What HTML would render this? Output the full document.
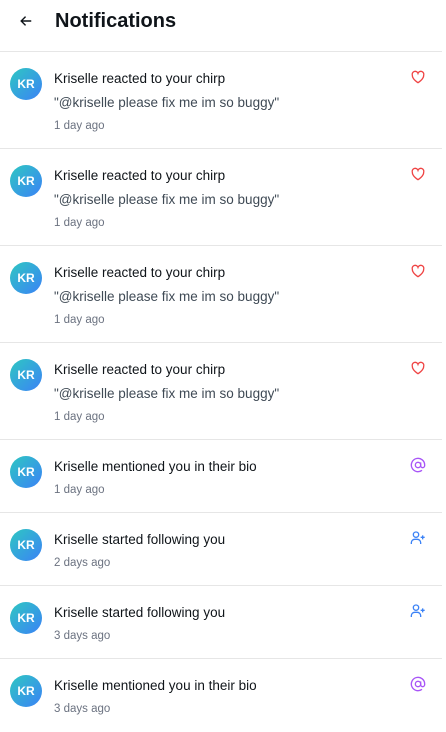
<!DOCTYPE html>
<html><head><meta charset="utf-8"><style>
*{box-sizing:border-box;margin:0;padding:0}
body{width:446px;height:729px;background:#fff;font-family:"Liberation Sans",sans-serif;color:#0f1419;overflow:hidden;position:relative}
.hdr{height:52px;border-bottom:1px solid #e6e6e6;width:442px;position:relative}
.hdr svg{position:absolute;left:19px;top:14px}
.hdr h1{position:absolute;left:55px;top:8px;font-size:20px;font-weight:bold;line-height:26px;color:#0f1419}
.row{position:relative;border-bottom:1px solid #e6e6e6;width:442px}
.big{height:97px}.sm{height:73px}
.av{position:absolute;left:10px;top:16px;width:32px;height:32px;border-radius:50%;background:linear-gradient(135deg,#2ec7c2,#3b82f6);color:#fff;font-size:12px;font-weight:bold;text-align:center;line-height:32px}
.t{position:absolute;left:54px;top:17px}
.l1{font-size:13.5px;line-height:20px;color:#0f1419}
.l2{font-size:13.5px;line-height:20px;color:#3f4a55;margin-top:4px}
.l3{font-size:11.5px;line-height:18px;color:#6b7280;margin-top:4px}
.sm .l3{margin-top:4px}
.ic{position:absolute;left:410px;top:17px}
</style></head><body>
<div class="hdr"><svg width="14" height="14" viewBox="0 0 16 16"><path d="M14 8H2.5M7.5 3L2.5 8l5 5" fill="none" stroke="#0f1419" stroke-width="1.6"/></svg><h1>Notifications</h1></div>

<div class="row big"><div class="av">KR</div><div class="t"><div class="l1">Kriselle reacted to your chirp</div><div class="l2">"@kriselle please fix me im so buggy"</div><div class="l3">1 day ago</div></div><svg class="ic" width="16" height="16" viewBox="0 0 24 24"><path d="M12 20.5s-8.5-5-8.5-11A4.5 4.5 0 0 1 12 6.5a4.5 4.5 0 0 1 8.5 3c0 6-8.5 11-8.5 11z" fill="none" stroke="#ef4444" stroke-width="2"/></svg></div>
<div class="row big"><div class="av">KR</div><div class="t"><div class="l1">Kriselle reacted to your chirp</div><div class="l2">"@kriselle please fix me im so buggy"</div><div class="l3">1 day ago</div></div><svg class="ic" width="16" height="16" viewBox="0 0 24 24"><path d="M12 20.5s-8.5-5-8.5-11A4.5 4.5 0 0 1 12 6.5a4.5 4.5 0 0 1 8.5 3c0 6-8.5 11-8.5 11z" fill="none" stroke="#ef4444" stroke-width="2"/></svg></div>
<div class="row big"><div class="av">KR</div><div class="t"><div class="l1">Kriselle reacted to your chirp</div><div class="l2">"@kriselle please fix me im so buggy"</div><div class="l3">1 day ago</div></div><svg class="ic" width="16" height="16" viewBox="0 0 24 24"><path d="M12 20.5s-8.5-5-8.5-11A4.5 4.5 0 0 1 12 6.5a4.5 4.5 0 0 1 8.5 3c0 6-8.5 11-8.5 11z" fill="none" stroke="#ef4444" stroke-width="2"/></svg></div>
<div class="row big"><div class="av">KR</div><div class="t"><div class="l1">Kriselle reacted to your chirp</div><div class="l2">"@kriselle please fix me im so buggy"</div><div class="l3">1 day ago</div></div><svg class="ic" width="16" height="16" viewBox="0 0 24 24"><path d="M12 20.5s-8.5-5-8.5-11A4.5 4.5 0 0 1 12 6.5a4.5 4.5 0 0 1 8.5 3c0 6-8.5 11-8.5 11z" fill="none" stroke="#ef4444" stroke-width="2"/></svg></div>

<div class="row sm"><div class="av">KR</div><div class="t"><div class="l1">Kriselle mentioned you in their bio</div><div class="l3">1 day ago</div></div><svg class="ic" width="16" height="16" viewBox="0 0 24 24"><circle cx="12" cy="12" r="4" fill="none" stroke="#a855f7" stroke-width="2"/><path d="M16 8v5a3 3 0 0 0 6 0v-1a10 10 0 1 0-4 8" fill="none" stroke="#a855f7" stroke-width="2"/></svg></div>
<div class="row sm"><div class="av">KR</div><div class="t"><div class="l1">Kriselle started following you</div><div class="l3">2 days ago</div></div><svg class="ic" width="16" height="16" viewBox="0 0 24 24"><circle cx="9" cy="7" r="4" fill="none" stroke="#3b82f6" stroke-width="2"/><path d="M2 21v-2a5 5 0 0 1 5-5h4a5 5 0 0 1 5 5v2M19 8v6M16 11h6" fill="none" stroke="#3b82f6" stroke-width="2"/></svg></div>
<div class="row sm"><div class="av">KR</div><div class="t"><div class="l1">Kriselle started following you</div><div class="l3">3 days ago</div></div><svg class="ic" width="16" height="16" viewBox="0 0 24 24"><circle cx="9" cy="7" r="4" fill="none" stroke="#3b82f6" stroke-width="2"/><path d="M2 21v-2a5 5 0 0 1 5-5h4a5 5 0 0 1 5 5v2M19 8v6M16 11h6" fill="none" stroke="#3b82f6" stroke-width="2"/></svg></div>
<div class="row sm" style="border-bottom:none"><div class="av">KR</div><div class="t"><div class="l1">Kriselle mentioned you in their bio</div><div class="l3">3 days ago</div></div><svg class="ic" width="16" height="16" viewBox="0 0 24 24"><circle cx="12" cy="12" r="4" fill="none" stroke="#a855f7" stroke-width="2"/><path d="M16 8v5a3 3 0 0 0 6 0v-1a10 10 0 1 0-4 8" fill="none" stroke="#a855f7" stroke-width="2"/></svg></div>
</body></html>
